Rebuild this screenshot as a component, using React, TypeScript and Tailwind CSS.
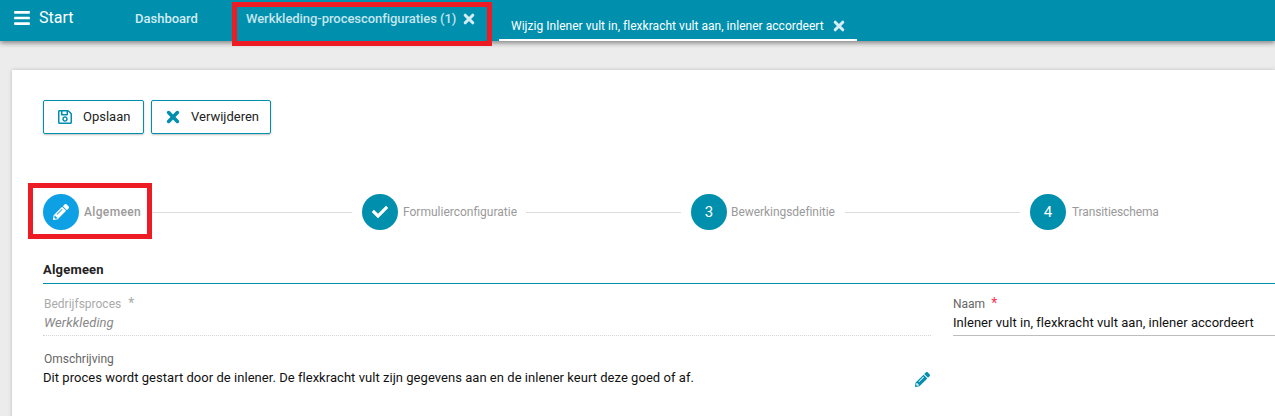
import { FaBars, FaCheck, FaPencilAlt, FaRegSave } from 'react-icons/fa'

// chunky fa-times look, the package one is too thin at this size
function Cross(props: { size: number; className?: string }) {
  return (
    <svg width={props.size} height={props.size} viewBox="0 0 14 14" className={props.className} fill="none" stroke="currentColor" strokeWidth="3.6" strokeLinecap="round">
      <path d="M2.6 2.6 L11.4 11.4 M11.4 2.6 L2.6 11.4" />
    </svg>
  )
}

function Tab(props: { label: string; gap: string; className?: string }) {
  return (
    <div className={'flex items-center ' + (props.className ?? '')}>
      <span>{props.label}</span>
      <Cross size={12} className={props.gap + ' text-[#d6eef3]'} />
    </div>
  )
}

function Step(props: { label: string; icon: React.ReactNode; active?: boolean; labelClass: string; className?: string }) {
  return (
    <div className={'flex items-center shrink-0 ' + (props.className ?? '')}>
      <div className={'w-9 h-9 rounded-full flex items-center justify-center text-white ' + (props.active ? 'bg-[#0ea0e4]' : 'bg-[#008fad]')}>
        {props.icon}
      </div>
      <span className={'text-[12px] whitespace-nowrap text-[#9a9a9a] ' + props.labelClass}>{props.label}</span>
    </div>
  )
}

export default function App() {
  return (
    <div className="relative w-[1275px] h-[416px] overflow-hidden bg-[#ececec] font-['Roboto',sans-serif]">
      <header className="h-[41px] bg-[#008fad] flex text-white shadow-[0_2px_5px_rgba(0,0,0,0.45)] relative z-10">
        <div className="flex items-center pl-[13px] w-[135px] h-[36px]">
          <FaBars size={18} />
          <span className="ml-[8px] text-[16px]">Start</span>
        </div>
        <div className="flex items-center h-[38px] w-[97px] text-[13px] font-medium text-[#d2ecf2]">Dashboard</div>
        <Tab label="Werkkleding-procesconfiguraties (1)" gap="ml-[7px]" className="h-[38px] w-[267px] pl-[14px] text-[13px] font-medium tracking-[-0.05px] text-[#c5e6ed]" />
        <Tab label="Wijzig Inlener vult in, flexkracht vult aan, inlener accordeert" gap="ml-[9px]" className="h-[41px] w-[358px] pl-[12px] pt-[13px] pb-[1px] text-[12px] tracking-[0.03px] border-b-[2px] border-white" />
      </header>

      <main className="ml-[12px] mt-[29px] h-[360px] bg-white shadow-[0_0_4px_rgba(0,0,0,0.2)] pl-[31px] pt-[30px]">
        <div className="flex gap-[7px]">
          <button className="w-[101px] h-[34px] flex items-center pl-[13px] border border-[#008fad] rounded-[2px] shadow-[0_1px_2px_rgba(0,0,0,0.25)] text-[13px] text-[#222]">
            <FaRegSave size={16} className="text-[#008fad]" />
            <span className="ml-[10px]">Opslaan</span>
          </button>
          <button className="w-[120px] h-[34px] flex items-center pl-[14px] border border-[#008fad] rounded-[2px] shadow-[0_1px_2px_rgba(0,0,0,0.25)] text-[13px] text-[#222]">
            <Cross size={14} className="text-[#008fad]" />
            <span className="ml-[11px]">Verwijderen</span>
          </button>
        </div>

        <div className="flex items-center mt-[60px] h-[36px]">
          <Step label="Algemeen" active icon={<FaPencilAlt size={16} />} labelClass="ml-[5px] w-[57px] font-medium tracking-[0.35px]" />
          <div className="ml-[11px] w-[200px] h-px bg-[#dddddd]" />
          <Step label="Formulierconfiguratie" icon={<FaCheck size={16} />} labelClass="ml-[5px] w-[113px]" className="ml-[10px]" />
          <div className="ml-[10px] w-[155px] h-px bg-[#dddddd]" />
          <Step label="Bewerkingsdefinitie" icon={<span className="text-[15px]">3</span>} labelClass="ml-[4px] w-[104px] tracking-[-0.05px]" className="ml-[10px]" />
          <div className="ml-[10px] w-[175px] h-px bg-[#dddddd]" />
          <Step label="Transitieschema" icon={<span className="text-[15px]">4</span>} labelClass="ml-[6px] tracking-[-0.12px]" className="ml-[10px]" />
        </div>

        <h2 className="mt-[32px] h-[21px] text-[13px] font-bold text-[#222] leading-[16px] tracking-[0.2px]">Algemeen</h2>
        <div className="h-px bg-[#008fad]" />

        <div className="flex mt-[11px]">
          <div className="w-[888px]">
            <div className="text-[12px] leading-[16px] text-[#aaaaaa] pl-px">
              Bedrijfsproces <span className="ml-[4px] text-[14px]">*</span>
            </div>
            <div className="mt-[2px] h-[22px] pl-px text-[13px] italic leading-[18px] tracking-[0.1px] text-[#888888] border-b border-dotted border-[#d5d5d5]">Werkkleding</div>
          </div>
          <div className="ml-[22px] flex-1">
            <div className="text-[12px] leading-[16px] text-[#666666]">
              Naam <span className="ml-[3px] text-[14px] text-[#ff3355]">*</span>
            </div>
            <div className="mt-[2px] h-[22px] text-[13px] leading-[18px] tracking-[0.035px] text-[#111] border-b border-[#bdbdbd]">Inlener vult in, flexkracht vult aan, inlener accordeert</div>
          </div>
        </div>

        <div className="mt-[15px] w-[887px]">
          <div className="pl-px text-[12px] leading-[16px] text-[#666666]">Omschrijving</div>
          <div className="mt-[2px] flex items-center justify-between text-[13px] leading-[18px] tracking-[0.04px] text-[#111]">
            <span>Dit proces wordt gestart door de inlener. De flexkracht vult zijn gegevens aan en de inlener keurt deze goed of af.</span>
            <FaPencilAlt size={15} className="text-[#008fad] mt-[3px]" />
          </div>
        </div>
      </main>

      {/* red annotation boxes from the screenshot */}
      <div className="absolute z-20 left-[232px] top-[2px] w-[260px] h-[44px] border-[5px] border-[#ed1c24]" />
      <div className="absolute z-20 left-[28px] top-[183px] w-[124px] h-[56px] border-[5px] border-[#ed1c24]" />
    </div>
  )
}
